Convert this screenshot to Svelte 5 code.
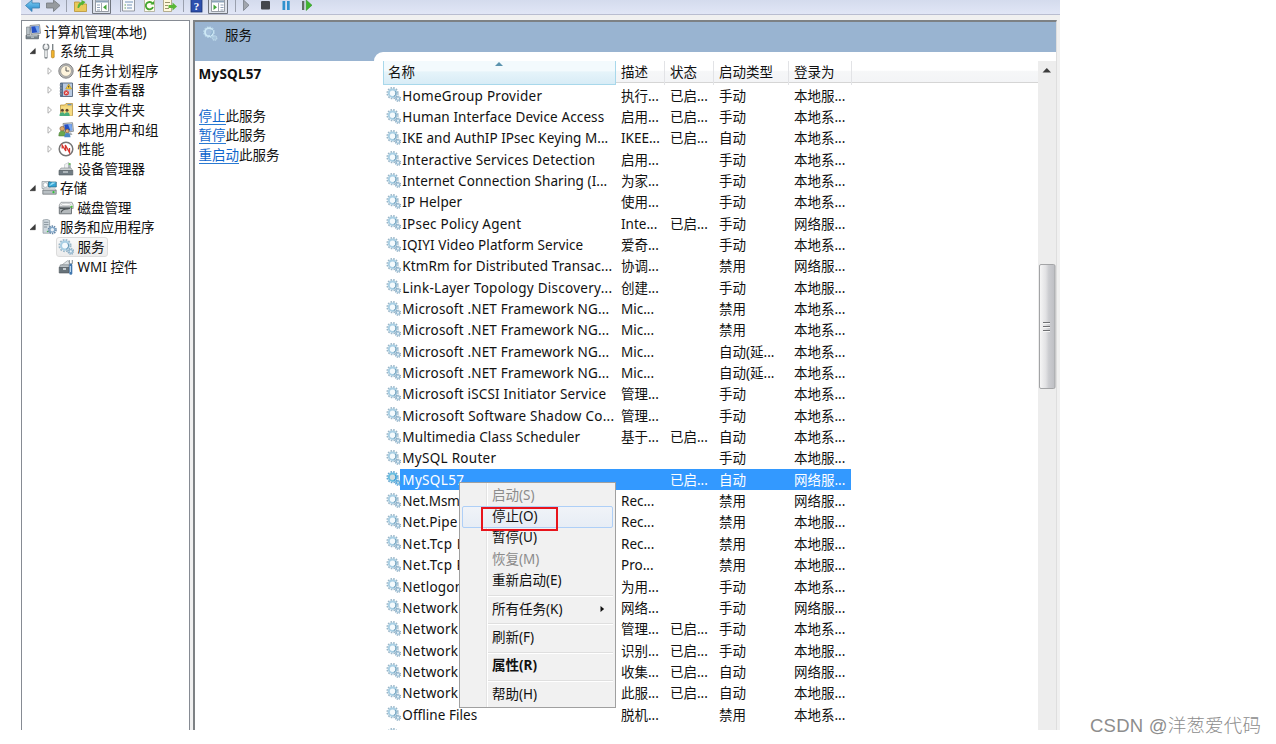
<script>
  const tree = [
    { t: '计算机管理(本地)', d: 0, i: 'computer' },
    { t: '系统工具', d: 1, i: 'tools', a: 'open' },
    { t: '任务计划程序', d: 2, i: 'clock', a: 'closed' },
    { t: '事件查看器', d: 2, i: 'event', a: 'closed' },
    { t: '共享文件夹', d: 2, i: 'share', a: 'closed' },
    { t: '本地用户和组', d: 2, i: 'users', a: 'closed' },
    { t: '性能', d: 2, i: 'perf', a: 'closed' },
    { t: '设备管理器', d: 2, i: 'device' },
    { t: '存储', d: 1, i: 'storage', a: 'open' },
    { t: '磁盘管理', d: 2, i: 'disk' },
    { t: '服务和应用程序', d: 1, i: 'apps', a: 'open' },
    { t: '服务', d: 2, i: 'gear', sel: true },
    { t: 'WMI 控件', d: 2, i: 'wmi' }
  ];

  // name, name width, description, status, startup type, account
  const rows = [
    ['HomeGroup Provider', 140, '执行...', '已启...', '手动', '本地服...'],
    ['Human Interface Device Access', 202, '启用...', '已启...', '手动', '本地系...'],
    ['IKE and AuthIP IPsec Keying M...', 206, 'IKEE...', '已启...', '自动', '本地系...'],
    ['Interactive Services Detection', 193, '启用...', '', '手动', '本地系...'],
    ['Internet Connection Sharing (I...', 205, '为家...', '', '手动', '本地系...'],
    ['IP Helper', 60, '使用...', '', '手动', '本地系...'],
    ['IPsec Policy Agent', 119, 'Inte...', '已启...', '手动', '网络服...'],
    ['IQIYI Video Platform Service', 181, '爱奇...', '', '手动', '本地系...'],
    ['KtmRm for Distributed Transac...', 210, '协调...', '', '禁用', '网络服...'],
    ['Link-Layer Topology Discovery...', 210, '创建...', '', '手动', '本地服...'],
    ['Microsoft .NET Framework NG...', 207, 'Mic...', '', '禁用', '本地系...'],
    ['Microsoft .NET Framework NG...', 207, 'Mic...', '', '禁用', '本地系...'],
    ['Microsoft .NET Framework NG...', 207, 'Mic...', '', '自动(延...', '本地系...'],
    ['Microsoft .NET Framework NG...', 207, 'Mic...', '', '自动(延...', '本地系...'],
    ['Microsoft iSCSI Initiator Service', 204, '管理...', '', '手动', '本地系...'],
    ['Microsoft Software Shadow Co...', 212, '管理...', '', '手动', '本地系...'],
    ['Multimedia Class Scheduler', 178, '基于...', '已启...', '自动', '本地系...'],
    ['MySQL Router', 94, '', '', '手动', '本地服...'],
    ['MySQL57', 62, '', '已启...', '自动', '网络服...'],
    ['Net.Msmq', 66, 'Rec...', '', '禁用', '网络服...'],
    ['Net.Pipe L', 66, 'Rec...', '', '禁用', '本地服...'],
    ['Net.Tcp L', 62, 'Rec...', '', '禁用', '本地服...'],
    ['Net.Tcp P', 63, 'Pro...', '', '禁用', '本地服...'],
    ['Netlogon', 61, '为用...', '', '手动', '本地系...'],
    ['Network', 56, '网络...', '', '手动', '网络服...'],
    ['Network', 56, '管理...', '已启...', '手动', '本地系...'],
    ['Network', 56, '识别...', '已启...', '手动', '本地服...'],
    ['Network', 56, '收集...', '已启...', '自动', '网络服...'],
    ['Network', 56, '此服...', '已启...', '自动', '本地服...'],
    ['Offline Files', 75, '脱机...', '', '禁用', '本地系...'],
    ['', 0, '', '', '', '']
  ];

  const menu = [
    { t: '启动(S)', off: true },
    { t: '停止(O)', hot: true },
    { t: '暂停(U)' },
    { t: '恢复(M)', off: true },
    { t: '重新启动(E)' },
    null,
    { t: '所有任务(K)', sub: true },
    null,
    { t: '刷新(F)' },
    null,
    { t: '属性(R)', bold: true },
    null,
    { t: '帮助(H)' }
  ];

  function fit(node, width) {
    const own = node.getBoundingClientRect().width;
    const n = node.textContent.length;
    if (n && own && width) node.style.letterSpacing = (width - own) / n + 'px';
  }
</script>

{#snippet icon(n)}
  <svg class="ic" viewBox="0 0 16 16">
    {#if n === 'gear'}
      <circle cx="7" cy="6.6" r="5.7" fill="none" stroke="#9ab6c8" stroke-width="1.7" stroke-dasharray="1.75 1.23" />
      <circle cx="7" cy="6.6" r="4" fill="#f4fafd" stroke="#a9cfe4" stroke-width="2.1" />
      <path d="M9.900 4.400a3.900 3.900 0 0 1-1.700 5.800" fill="none" stroke="#6b96b2" stroke-width="1" />
      <circle cx="12.8" cy="12.4" r="2.7" fill="none" stroke="#86a9c1" stroke-width="1.5" stroke-dasharray="1.2 .92" />
      <circle cx="12.8" cy="12.4" r="1.7" fill="#e7f3fa" stroke="#93b8d0" stroke-width="1.2" />
    {:else if n === 'pale'}
      <circle cx="7" cy="6.200" r="5.200" fill="none" stroke="#b5d3e6" stroke-width="1.4" stroke-dasharray="1.7 1" />
      <circle cx="7" cy="6.200" r="4" fill="#a5c0db" stroke="#cfe9f6" stroke-width="1.8" />
      <path d="M9.800 3.800a3.900 3.900 0 0 1-1.700 5.600" fill="none" stroke="#7ea6c4" />
      <circle cx="12.600" cy="12" r="2.200" fill="#a9c6dd" stroke="#bdd9e9" stroke-width="1.300" stroke-dasharray="1.300 .5" />
    {:else if n === 'computer' || n === 'users'}
      <path d="M5 1.5l9.5-.8 1 8.6-9.3 1z" fill="#d3d7da" stroke="#7c8388" stroke-width=".8" />
      <path d="M6.2 2.5l7.4-.6.7 6.4-7.3.8z" fill="#244fc4" />
      <path d="M10 2.2l3.6-.3.7 6.4-2 .2z" fill="#79a8ee" />
      {#if n === 'computer'}
        <path d="M1.500 3h3.500v7.500H1.500z" fill="#b7c0c6" stroke="#737b80" stroke-width=".6" />
        <path d="M7 10.300l6-.6 1.500 2H7z" fill="#dfe2e4" stroke="#8d9498" stroke-width=".4" />
        <path d="M1 11.200h12.500v3.600H1z" fill="#76828a" stroke="#596268" stroke-width=".7" />
        <path d="M2 11.800h10.500M6 13.200h3" stroke="#dfe6e9" stroke-width=".8" />
      {:else}
        <path d="M8 11l5-.5 1.5 2.5H9z" fill="#a9afb3" />
        <circle cx="4.2" cy="6.7" r="2.3" fill="#dba66b" stroke="#7a5430" stroke-width=".6" />
        <path d="M.8 14q0-5 3.4-5t3.6 5z" fill="#6aa84e" stroke="#477735" stroke-width=".5" />
        <circle cx="9.2" cy="9" r="1.9" fill="#e2b27c" stroke="#6d4b2c" stroke-width=".6" />
        <path d="M6.3 15.2q0-4.3 3-4.3t3.2 4.3z" fill="#4b87c6" />
      {/if}
    {:else if n === 'tools'}
      <path d="M5 6.500v7.700" stroke="#888e92" stroke-width="3.200" stroke-linecap="round" />
      <path d="M5 7v7" stroke="#f0f2f3" stroke-width="1.700" />
      <circle cx="5" cy="4" r="2.900" fill="#e6e8e9" stroke="#81878b" stroke-width="1.100" />
      <path d="M5 0v4" stroke="#fff" stroke-width="1.500" />
      <path d="M11.700 1v6.500" stroke="#7d8588" stroke-width="1.4" />
      <path d="M10.400 7.5h2.800v6.800q-1.4 1.4-2.800 0z" fill="#f1b52d" stroke="#a97211" stroke-width=".6" />
    {:else if n === 'clock'}
      <circle cx="8" cy="8" r="7.200" fill="#bcbcbc" stroke="#777" stroke-width=".9" />
      <circle cx="8" cy="8" r="5.4" fill="#fff5dd" stroke="#8b8b86" stroke-width=".7" />
      <path d="M8 4.2V8h3.2" fill="none" stroke="#555" />
    {:else if n === 'event'}
      <path d="M2.500 1h12v13.5h-12z" fill="#b9cae2" stroke="#53647c" stroke-width=".9" />
      <path d="M2.500 1h2.500v13.5H2.500z" fill="#56708f" />
      <path d="M1.500 3h2.500M1.500 6h2.500M1.500 9h2.500M1.500 12h2.500" stroke="#8d97a2" />
      <path d="M10.7 2l3 5h-6z" fill="#ffd13c" stroke="#a98515" stroke-width=".5" />
      <path d="M10.7 3.8v1.8" stroke="#333" />
      <circle cx="8.3" cy="10.8" r="2.6" fill="#d73c38" /><path d="M7.2 9.7l2.2 2.2m0-2.2l-2.2 2.2" stroke="#fff" stroke-width=".8" />
    {:else if n === 'share'}
      <path d="M2.500 3h4L8 1.500h6.500v12h-12z" fill="#f0cf70" stroke="#b08b38" stroke-width=".7" />
      <path d="M3 4.500h11v9H3z" fill="#f7dc83" />
      <path d="M9.500 2.700h4" stroke="#5c8dc5" stroke-width="1.200" />
      <circle cx="4.400" cy="8.200" r="1.500" fill="#5d4630" /><circle cx="9" cy="8.200" r="1.500" fill="#5d4630" />
      <path d="M1.500 13.900q0-3.600 2.800-3.600t2.500 3.600zM6.500 13.900q0-3.600 2.600-3.600t2.600 3.600z" fill="#48ad7c" />
    {:else if n === 'perf'}
      <circle cx="8" cy="8" r="6.800" fill="#fff" stroke="#757575" stroke-width="1.500" />
      <path d="M4.200 7.500V4.200L7.800 10 7.300 4l4.200 7.500V7" fill="none" stroke="#d5352e" stroke-width="1.300" />
    {:else if n === 'device'}
      <path d="M6.5 3.500l4-2v6h-4z" fill="#eef0f1" stroke="#b9bfc2" stroke-width=".6" />
      <path d="M10.2 1.4l2.6 1V8h-2.6z" fill="#a7b1b6" />
      <path d="M10.800 3h1.600" stroke="#5dcb42" stroke-width="1.6" />
      <path d="M3 7h10l1.7 2.5H1.2z" fill="#cbd0d3" stroke="#82888c" stroke-width=".6" />
      <path d="M1 9.5h13.8V14H1z" fill="#727d84" stroke="#4f575c" stroke-width=".6" />
      <path d="M5 10h5v2H5z" fill="#aeb6ba" />
    {:else if n === 'storage'}
      <path d="M1 1.5h8v7H1z" fill="#e1e5e8" stroke="#8d969c" stroke-width=".7" />
      <circle cx="4.4" cy="5" r="2.4" fill="#fff" stroke="#a5adb2" stroke-width=".8" />
      <path d="M7.5 2h7.8v5H7.5z" fill="#35a6d7" stroke="#27617c" stroke-width=".7" />
      <path d="M8 6.3l3-3.8h4z" fill="#9ee0f5" />
      <path d="M3.2 8.2h10.5l1.5 2H1.8z" fill="#f1f3f4" stroke="#a1a7aa" stroke-width=".5" />
      <path d="M1.8 10.2h13.4v4H1.8z" fill="#b8bfc3" stroke="#656d71" stroke-width=".7" />
      <circle cx="12.5" cy="12.2" r="1.1" fill="#2fc337" />
    {:else if n === 'disk'}
      <path d="M3 2.300h11l1.200 2.700v3.500H1.300V5z" fill="#e8e9ea" stroke="#858b8e" stroke-width=".7" />
      <ellipse cx="8" cy="4.5" rx="4.5" ry="1.3" fill="#fafafa" stroke="#b0b4b6" stroke-width=".6" />
      <path d="M1.3 7h12.200v6.800H1.3z" fill="#b5babd" stroke="#596064" stroke-width=".8" />
      <path d="M3 12.500q1.500-4 7.500-3.500M2 8.300h10" fill="none" stroke="#505659" stroke-width="1.200" />
      <circle cx="13.600" cy="6.800" r="1.100" fill="#4cc540" />
    {:else if n === 'apps'}
      <path d="M2 1l4-.6 2.6 1v12.8H2z" fill="#cfd8de" stroke="#8a959c" stroke-width=".7" />
      <path d="M3 3.3h4.5M3 5.6h4.5M3 8h3" stroke="#74818a" stroke-width=".8" />
      <circle cx="6.6" cy="12.5" r=".8" fill="#48bd4d" />
      <circle cx="11.3" cy="10.8" r="3.7" fill="none" stroke="#6587a8" stroke-width="1.6" stroke-dasharray="1.5 .82" />
      <circle cx="11.3" cy="10.8" r="2.4" fill="#eaf3fa" stroke="#82a7c8" stroke-width="1.3" />
    {:else if n === 'wmi'}
      <path d="M4.500 5.500l5-3.800 2 .8v4H4.500z" fill="#dfe3e5" stroke="#7f868a" stroke-width=".6" />
      <path d="M2.5 5.8H11v3H1.2z" fill="#b9c0c4" stroke="#6c7479" stroke-width=".6" />
      <path d="M1.2 8.5H11V14H1.2z" fill="#68737a" stroke="#4d565b" stroke-width=".6" />
      <path d="M5 9h3v2H5z" fill="#c5ccd0" />
      <path d="M11.300 1v3.200l1.500 1.400 1.500-1.400V1" fill="none" stroke="#8b9498" stroke-width="1.1" />
      <path d="M12.800 6v8.300" stroke="#4177ae" stroke-width="3" stroke-linecap="round" />
      <path d="M12.500 7v6" stroke="#c8e1f5" stroke-width=".9" />
    {/if}
  </svg>
{/snippet}

<div class="page">
  <div class="window">
    <svg class="toolbar" viewBox="21 0 1039 15">
      <defs>
        <linearGradient id="bar" x2="0" y2="1"><stop offset="0" stop-color="#d4dbed" /><stop offset="1" stop-color="#e1e6f6" /></linearGradient>
        <linearGradient id="blue" x2="0" y2="1"><stop offset="0" stop-color="#81d0f5" /><stop offset="1" stop-color="#2084c9" /></linearGradient>
      </defs>
      <rect x="21" width="1039" height="14" fill="url(#bar)" />
      <rect x="21" y="14" width="1039" height="1" fill="#b9bdd0" />
      <path d="M25.500 5.500L32 0v3H39.500v5H32v3.500z" fill="url(#blue)" stroke="#3b7fae" stroke-width=".8" />
      <path d="M60 5.500L53.500 0v3H46.500v5H53.500v3.500z" fill="#969a9e" stroke="#73787d" stroke-width=".8" />
      <path d="M66.500 0v12M120.500 0v12M183.500 0v12M235.500 0v12" stroke="#9aa0ae" />
      <path d="M74.500 2h5l1.500 2h5.500v7.500h-12z" fill="#eac95c" stroke="#b99334" stroke-width=".8" />
      <path d="M77.500 8q0-5 4-6V0l4 2-3.500 3.500V4.500q-2 .5-3 3.500z" fill="#55b436" />
      <path d="M92.500-2h18v15.500h-18zM208.500-2h19v15.500h-19z" fill="#dde2eb" stroke="#70757e" />
      <path d="M95.500 0h13v11.500h-13zM211.500 0h13v11.500h-13z" fill="#fff" stroke="#8c929b" stroke-width=".9" />
      <path d="M96 1.500h12M212 1.500h12" stroke="#8da3b9" stroke-width="2" />
      <path d="M97 5h3M97 7.500h3M97 10h3M220.500 5h3M220.500 7.500h3M220.500 10h3" stroke="#8fa0b7" />
      <path d="M101.500 3v8M218.500 3v8" stroke="#a2a8b0" />
      <path d="M106.500 4.500v5.500l-3.500-2.800zM213.500 4.500v5.500l3.500-2.800z" fill="#43a638" />
      <path d="M122.500-1h12v12h-12z" fill="#f8fafc" stroke="#8b9099" stroke-width=".9" />
      <path d="M125 2h8M127 5h5M127 8h5" stroke="#7594ba" /><path d="M124.500 5h1.500M124.500 8h1.500" stroke="#67a35c" />
      <path d="M144.500-1h10v12.500h-10z" fill="#fffdf0" stroke="#aaa98f" stroke-width=".8" />
      <path d="M152.500 3.500A3.700 3.700 0 1 0 153 7" fill="none" stroke="#43a52f" stroke-width="1.800" /><path d="M150.500 4.500h3.500V1z" fill="#43a52f" />
      <path d="M163.500-1h8v12.500h-8z" fill="#fff9db" stroke="#a59c79" stroke-width=".8" />
      <path d="M165 2.500h5M165 5.500h3M165 8.500h4" stroke="#9a936e" />
      <path d="M168.500 5h4V2.500l4.500 4-4.500 4V8h-4z" fill="#59b735" />
      <rect x="191" y="-1" width="11" height="13" fill="#2c4fad" stroke="#193273" stroke-width=".8" />
      <text x="193.800" y="10" class="help">?</text>
      <path d="M243.500 0v10.500l5.500-5.300z" fill="#a1a6ae" stroke="#777d86" stroke-width=".8" />
      <rect x="261" y="1" width="9" height="8.500" rx="1" fill="#43464c" />
      <path d="M282.500 1h2.700v9h-2.700zM287 1h2.700v9H287z" fill="#2f91ce" />
      <path d="M302 1h2.300v9H302z" fill="#626e66" /><path d="M306.200 0v10.500l5.800-5.300z" fill="#3fb62d" stroke="#298b1d" stroke-width=".5" />
    </svg>

    <div class="body">
      <aside class="tree">
        {#each tree as n}
          <div class="node d{n.d}">
            {#if n.d}
              <span class="arrow">
                <svg viewBox="0 0 8 8">
                  {#if n.a === 'open'}<path d="M6.300 1.500v5.200H1z" fill="#3c3c3c" stroke="#222" stroke-width=".5" />
                  {:else if n.a === 'closed'}<path d="M2 .8v6.400L5.500 4z" fill="#fff" stroke="#a8a8a8" stroke-width=".9" />{/if}
                </svg>
              </span>
            {/if}
            <span class="label" class:sel={n.sel}>{@render icon(n.i)}<span>{n.t}</span></span>
          </div>
        {/each}
      </aside>

      <main class="pane">
        <header>
          <div class="title">{@render icon('pale')}<span>服务</span></div>
          <div class="tab"></div>
        </header>
        <div class="content">
          <section class="detail">
            <h1>MySQL57</h1>
            <p><a>停止</a>此服务</p>
            <p><a>暂停</a>此服务</p>
            <p><a>重启动</a>此服务</p>
          </section>
          <section class="list">
            <div class="cols head">
              <span class="sorted">名称<i></i></span><span>描述</span><span>状态</span><span>启动类型</span><span>登录为</span><span></span>
            </div>
            {#each rows as r, k}
              <div class="cols row" class:active={k === 18}>
                <span class="name">{@render icon('gear')}<b><em use:fit={r[1]}>{r[0]}</em></b></span>
                <span>{r[2]}</span><span>{r[3]}</span><span>{r[4]}</span><span>{r[5]}</span>
              </div>
            {/each}
          </section>
          <div class="scroll">
            <svg viewBox="0 0 18 669">
              <defs>
                <linearGradient id="thumb"><stop offset="0" stop-color="#f7f7f7" /><stop offset=".4" stop-color="#e2e2e4" /><stop offset=".6" stop-color="#cbccd0" /><stop offset="1" stop-color="#bdbec3" /></linearGradient>
              </defs>
              <path d="M4.500 11.500L8.800 7 13 11.500z" fill="#3c3c3c" />
              <rect x="1.500" y="203.500" width="15.500" height="124" rx="1.500" fill="url(#thumb)" stroke="#a3a4a6" />
              <path d="M5 261.500h7M5 265.500h7M5 269.500h7" stroke="#6f7073" />
              <path d="M5 262.500h7M5 266.500h7M5 270.500h7" stroke="#f6f6f6" />
            </svg>
          </div>
        </div>
      </main>
    </div>

    <div class="menu">
      {#each menu as m}
        {#if m}
          <div class="item" class:off={m.off} class:hot={m.hot} class:bold={m.bold}>
            <span>{m.t}</span>
            {#if m.sub}<svg viewBox="0 0 5 8"><path d="M.5 1v6l3.700-3z" fill="#111" /></svg>{/if}
          </div>
        {:else}
          <hr />
        {/if}
      {/each}
      <div class="mark"></div>
    </div>
  </div>
  <div class="credit">CSDN @洋葱爱代码</div>
</div>

<style>
  :global(body) { background: #fff; overflow: hidden; }
  .page {
    position: relative;
    display: flex;
    width: 1276px;
    height: 744px;
    color: #111;
    font: 13.5px 'Noto Sans', 'Noto Sans CJK SC', sans-serif;
    white-space: nowrap;
  }
  .window {
    position: relative;
    display: flex;
    flex-direction: column;
    width: 1039px;
    height: 730px;
    margin-left: 21px;
    overflow: hidden;
    background: #f0f0f0;
  }
  .toolbar { display: block; width: 1039px; height: 15px; flex: none; }
  .help { font: bold 11px 'Liberation Serif', serif; fill: #fff; }
  .ic { width: 16px; height: 16px; flex: none; display: block; }
  .body { display: flex; gap: 3px; flex: 1; min-height: 0; padding-top: 5px; }
  .tree {
    box-sizing: border-box;
    width: 169px;
    padding: 1px 0 0 3px;
    border: 1px solid #868b93;
    border-bottom: 0;
    background: #fff;
  }
  .node { display: flex; align-items: center; height: 19.570px; }
  .node.d1 { padding-left: 2px; }
  .node.d2 { padding-left: 19px; }
  .arrow { width: 14px; padding-left: 2px; box-sizing: border-box; }
  .arrow svg { display: block; width: 8px; height: 8px; }
  .label {
    display: flex;
    align-items: center;
    gap: 3px;
    height: 18px;
    line-height: 18px;
  }
  .d2 .label { gap: 3.500px; }
  .label.sel {
    margin-left: -2px;
    padding: 0 2px 0 1px;
    border: 1px solid #dcdcdc;
    border-radius: 3px;
    background: linear-gradient(#f9f9f9, #ececec);
  }
  .pane {
    box-sizing: border-box;
    display: flex;
    flex-direction: column;
    width: 864px;
    border: 2px solid #7d8184;
    border-width: 2px 1px 0 2px;
    border-right-color: #dedede;
    background: #fff;
  }
  header { display: flex; flex-direction: column; justify-content: space-between; height: 39px; background: #99b4d1; flex: none; }
  .title { display: flex; gap: 7px; padding: 4px 0 0 7px; line-height: 19px; }
  .tab { height: 9px; margin-left: 179px; border-top-left-radius: 9px; background: #fff; }
  .content { display: flex; flex: 1; min-height: 0; }
  .detail { width: 188px; padding-left: 3.600px; box-sizing: border-box; flex: none; }
  h1 { margin: 4px 0 23.600px; font-size: 13.500px; line-height: 18px; letter-spacing: .2px; }
  p { margin: 0; line-height: 19.700px; }
  a { color: #0f66cc; border-bottom: 1px solid #2a7ad2; display: inline-block; line-height: 15px; }
  .list { width: 655px; overflow: hidden; flex: none; }
  .cols { display: grid; grid-template-columns: 233px 49px 49px 75px 63px 1fr; }
  .head {
    height: 22px;
    line-height: 23px;
    background: linear-gradient(#fff 45%, #f6f7f8 46%, #f3f4f6);
    box-sizing: border-box;
    border-bottom: 1px solid #d5d5d5;
    margin-bottom: 1.600px;
  }
  .head span { padding-left: 5px; border-right: 1px solid #e2e3e6; }
  .head span:last-child { border: 0; }
  .head .sorted {
    display: flex;
    justify-content: space-between;
    border: 1px solid #a8d8eb;
    border-width: 0 1px 1px;
    background: linear-gradient(#f3fafd 45%, #e6f4fa 46%, #d8ecf6);
    padding-left: 4px;
  }
  .sorted i {
    width: 0;
    height: 0;
    margin: 1px 112px 0 0;
    border: 4px solid transparent;
    border-top: 0;
    border-bottom-color: #5b93ae;
  }
  .row { height: 21.350px; line-height: 22.800px; }
  .row > span { padding-left: 5px; }
  .row > .name { display: flex; align-items: flex-start; padding-left: 3px; }
  .row .ic { width: 15px; height: 15px; margin-top: 2.600px; }
  .name b { flex: 1; font-weight: 400; padding-left: 1.300px; }
  em { font-style: normal; display: inline-block; }
  .active { color: #fff; background: linear-gradient(90deg, #fff 17px, #39f 17px, #39f 468px, #fff 468px); }
  .active .ic { filter: saturate(2.500) brightness(.88); }
  .scroll { width: 18px; background: #ededed; }
  .scroll svg { display: block; width: 18px; height: 669px; }
  .menu {
    position: absolute;
    left: 438px;
    top: 482px;
    width: 157px;
    height: 226px;
    box-sizing: border-box;
    padding: 2px 2px 3px;
    border: 1px solid #a0a0a0;
    background: linear-gradient(90deg, #f1f1f1 26px, #e3e3e3 26px, #e3e3e3 27px, #fff 27px, #fff 28px, #f1f1f1 28px);
  }
  .item {
    box-sizing: border-box;
    display: flex;
    justify-content: space-between;
    align-items: center;
    height: 21.400px;
    line-height: 17px;
    padding: 0 7px 1px 29px;
    border: 1px solid transparent;
    border-radius: 2px;
  }
  .item svg { width: 5px; height: 8px; }
  .off { color: #8b8b8b; }
  .hot { border-color: #aecff7; background: linear-gradient(#f0f3f8, #e7edf5); }
  .bold { font-weight: 700; }
  hr { height: 1px; margin: 3px 0 2px 26px; border: 0; border-bottom: 1px solid #fff; background: #dfdfdf; box-sizing: content-box; }
  .mark {
    position: absolute;
    left: 21px;
    top: 24px;
    width: 77px;
    height: 24px;
    box-sizing: border-box;
    border: 2px solid #e8141c;
  }
  .credit {
    margin: 712px 0 0 30px;
    color: #8d8d8d;
    font: 300 18.500px/27px 'Liberation Sans', 'Noto Sans CJK SC', sans-serif;
    letter-spacing: .22px;
  }
</style>
